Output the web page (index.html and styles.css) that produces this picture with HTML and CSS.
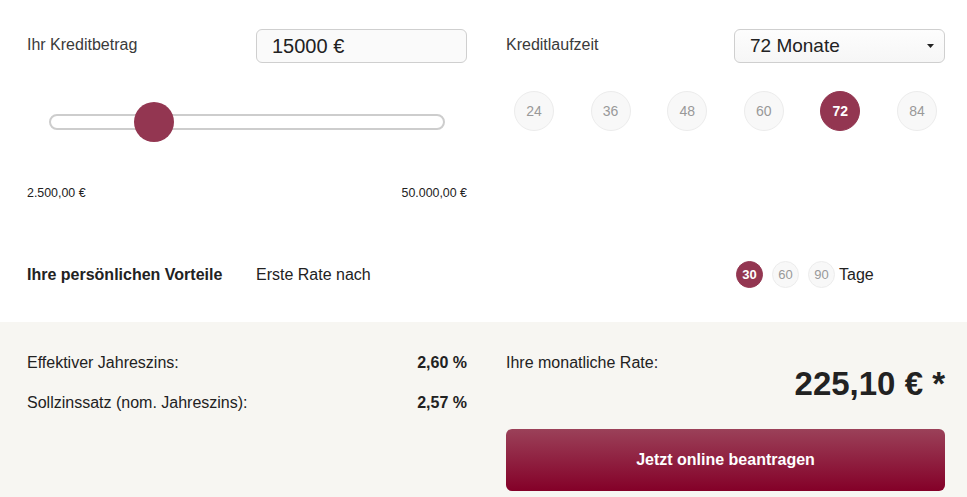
FILE: index.html
```html
<!DOCTYPE html>
<html lang="de">
<head>
<meta charset="utf-8">
<title>Kreditrechner</title>
<link rel="stylesheet" href="styles.css">
</head>
<body>
<div class="calc">
  <div class="cols">
    <div class="col">
      <div class="field-row">
        <label class="label">Ihr Kreditbetrag</label>
        <div class="input">15000 €</div>
      </div>
      <div class="slider">
        <div class="track">
          <div class="thumb" style="left: 26.3%"></div>
        </div>
      </div>
      <div class="range">
        <span>2.500,00 €</span>
        <span>50.000,00 €</span>
      </div>
    </div>
    <div class="col">
      <div class="field-row">
        <label class="label">Kreditlaufzeit</label>
        <div class="select">
          <span>72 Monate</span>
          <svg class="caret" width="7" height="4" viewBox="0 0 7 4"><path d="M0 0h7L3.5 4z" fill="#222"/></svg>
        </div>
      </div>
      <div class="months">
        <span class="circle">24</span>
        <span class="circle">36</span>
        <span class="circle">48</span>
        <span class="circle">60</span>
        <span class="circle active">72</span>
        <span class="circle">84</span>
      </div>
    </div>
  </div>

  <div class="cols row2">
    <div class="col pair">
      <strong class="benefit">Ihre persönlichen Vorteile</strong>
      <span class="text16">Erste Rate nach</span>
    </div>
    <div class="col pair">
      <span></span>
      <div class="days">
        <span class="dot active">30</span>
        <span class="dot">60</span>
        <span class="dot">90</span>
        <span class="text16 tage">Tage</span>
      </div>
    </div>
  </div>
</div>

<div class="results">
  <div class="cols">
    <div class="col rates">
      <div class="rate-row"><span>Effektiver Jahreszins:</span><strong>2,60 %</strong></div>
      <div class="rate-row"><span>Sollzinssatz (nom. Jahreszins):</span><strong>2,57 %</strong></div>
    </div>
    <div class="col">
      <div class="monthly">
        <span class="monthly-label">Ihre monatliche Rate:</span>
        <strong class="price">225,10 € *</strong>
      </div>
      <button class="cta">Jetzt online beantragen</button>
    </div>
  </div>
</div>
</body>
</html>
```

FILE: styles.css
```css
* { box-sizing: border-box; }

html, body {
  margin: 0;
  padding: 0;
  background: #fff;
}

body {
  font-family: "Liberation Sans", Arial, Helvetica, sans-serif;
  color: #333;
  width: 967px;
  height: 497px;
  overflow: hidden;
}

.calc {
  padding: 29px 22px 34px 27px;
}

.cols {
  display: grid;
  grid-template-columns: 440px 439px;
  column-gap: 39px;
}

.field-row {
  display: grid;
  grid-template-columns: 229px 211px;
  align-items: center;
  height: 34px;
}

.col:nth-child(2) .field-row {
  grid-template-columns: 228px 211px;
}

.label {
  font-size: 16px;
  line-height: 20px;
  margin-top: -2px;
  color: #3a3a3a;
}

.input,
.select {
  height: 34px;
  border: 1px solid #cfcfcf;
  border-radius: 6px;
  background: #fafafa;
  padding: 0 12px 0 15px;
  font-size: 20px;
  color: #222;
  display: flex;
  align-items: center;
}

.select {
  justify-content: space-between;
  font-size: 19px;
  background: linear-gradient(#fdfdfd, #f6f6f6);
}

.caret {
  display: block;
  margin-right: -2px;
}

.slider {
  margin-top: 39px;
  height: 40px;
  padding: 0 22px;
  display: flex;
  align-items: center;
}

.track {
  position: relative;
  width: 100%;
  height: 16px;
  border: 2px solid #cdcdcd;
  border-radius: 8px;
  background: #fff;
}

.thumb {
  position: absolute;
  top: 50%;
  width: 40px;
  height: 40px;
  margin: -20px 0 0 -20px;
  border-radius: 50%;
  background: #933651;
}

.range {
  margin-top: 44px;
  display: flex;
  justify-content: space-between;
  font-size: 12.4px;
  line-height: 14px;
  color: #222;
}

.months {
  margin-top: 28px;
  padding: 0 8px;
  display: flex;
  justify-content: space-between;
}

.circle {
  width: 40px;
  height: 40px;
  border-radius: 50%;
  background: #f8f8f8;
  border: 1px solid #ececec;
  color: #999;
  font-size: 14px;
  display: flex;
  align-items: center;
  justify-content: center;
}

.circle.active,
.dot.active {
  background: #933651;
  border-color: #933651;
  color: #fff;
  font-weight: bold;
}

.row2 {
  margin-top: 61px;
}

.pair {
  display: grid;
  grid-template-columns: 229px 211px;
  align-items: center;
  height: 27px;
}

.row2 .col:nth-child(2) {
  grid-template-columns: 230px 209px;
}

.benefit {
  font-size: 16px;
  color: #222;
}

.text16 {
  font-size: 16px;
  color: #222;
}

.days {
  display: flex;
  align-items: center;
  gap: 9px;
}

.dot {
  width: 27px;
  height: 27px;
  border-radius: 50%;
  background: #f8f8f8;
  border: 1px solid #ececec;
  color: #999;
  font-size: 13px;
  display: flex;
  align-items: center;
  justify-content: center;
}

.tage {
  margin-left: -5px;
}

.results {
  background: #f7f6f2;
  padding: 31px 22px 20px 27px;
  height: 175px;
}

.rates {
  display: flex;
  flex-direction: column;
  gap: 20px;
}

.rate-row {
  display: flex;
  justify-content: space-between;
  font-size: 16px;
  line-height: 20px;
  color: #222;
}

.rate-row strong {
  font-size: 16px;
}

.monthly {
  display: flex;
  justify-content: space-between;
  align-items: flex-start;
  color: #222;
}

.monthly-label {
  font-size: 16px;
  line-height: 20px;
}

.price {
  margin-top: 11px;
  font-size: 33px;
  line-height: 40px;
  color: #222;
}

.cta {
  display: block;
  width: 100%;
  height: 62px;
  margin-top: 25px;
  border: 0;
  border-radius: 6px;
  background: linear-gradient(#9b4159, #840028);
  color: #fff;
  font-family: inherit;
  font-size: 16px;
  font-weight: bold;
}
```
